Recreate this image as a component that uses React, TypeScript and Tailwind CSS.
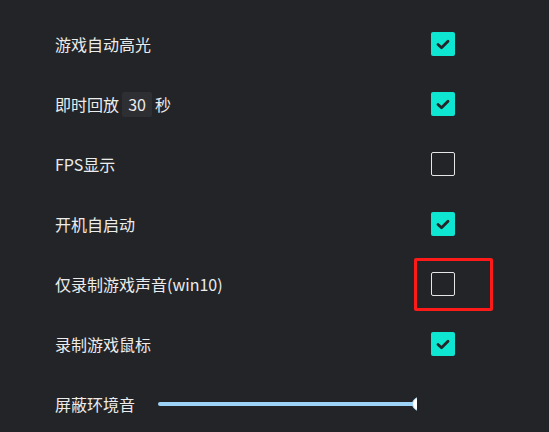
import React from "react";

const rows = [
  { label: "游戏自动高光", checked: true },
  { label: "即时回放", checked: true, seconds: "30" },
  { label: "FPS显示", checked: false },
  { label: "开机自启动", checked: true },
  { label: "仅录制游戏声音(win10)", checked: false, marked: true },
  { label: "录制游戏鼠标", checked: true },
];

const Checkbox: React.FC<{ checked: boolean }> = ({ checked }) =>
  checked ? (
    <div className="w-6 h-6 rounded-[2px] bg-[#0fe6d2] flex items-center justify-center">
      <svg width="14" height="11" viewBox="0 0 14 11" fill="none">
        <path
          d="M2 5.5 L5.5 8.8 L12 2.2"
          stroke="#232427"
          strokeWidth="2.8"
          strokeLinecap="round"
          strokeLinejoin="round"
        />
      </svg>
    </div>
  ) : (
    <div className="w-6 h-6 rounded-[2px] border-[1.5px] border-[#e6e6e6]" />
  );

export default function App() {
  return (
    <div
      className="w-[549px] h-[432px] bg-[#232427] text-[#ececec] text-[16px] pt-[14px] pl-[55px] overflow-hidden"
      style={{ fontFamily: '"Noto Sans CJK SC", "Noto Sans", sans-serif' }}
    >
      {rows.map((row, i) => (
        <div key={i} className="flex items-center h-[60px] w-[400px]">
          <div className="flex-1 flex items-center">
            <span>{row.label}</span>
            {row.seconds && (
              <>
                <span className="ml-[3px] w-[30px] h-[25px] bg-[#2d2f33] rounded-[2px] flex items-center justify-center">
                  {row.seconds}
                </span>
                <span className="ml-[3px]">秒</span>
              </>
            )}
          </div>
          <div className="relative">
            <Checkbox checked={row.checked} />
            {row.marked && (
              <div className="absolute left-[-17px] top-[-14px] w-[79px] h-[53px] border-[3px] border-[#ff1a1a] rounded-[2px]" />
            )}
          </div>
        </div>
      ))}

      {/* 屏蔽环境音 */}
      <div className="flex items-center h-[60px]">
        <span className="w-[103px]">屏蔽环境音</span>
        <div className="relative w-[259px] h-4 overflow-hidden flex items-center">
          <div className="w-[256px] h-1 rounded-l-full bg-[#9dd3f7]" />
          <div className="absolute left-[254px] top-px w-[14px] h-[14px] rounded-full bg-white border border-[#9dd3f7]" />
        </div>
      </div>
    </div>
  );
}
